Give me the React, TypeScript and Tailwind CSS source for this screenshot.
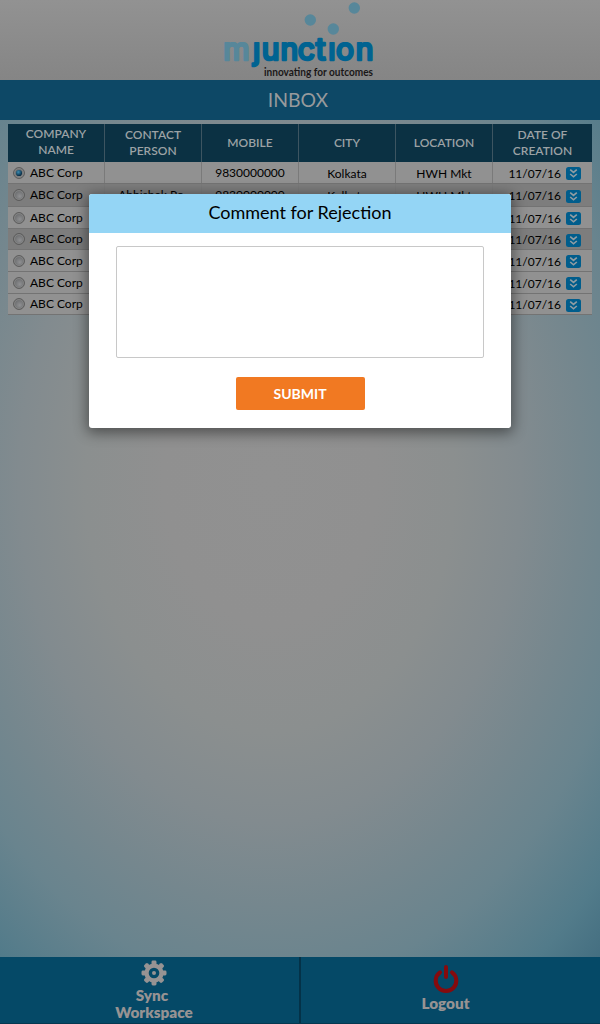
import React from "react";

const columns = [
  ["COMPANY", "NAME"],
  ["CONTACT", "PERSON"],
  ["MOBILE"],
  ["CITY"],
  ["LOCATION"],
  ["DATE OF", "CREATION"],
];

const rows = [
  { contact: "", h: "h-[22px]", bg: "bg-[#919191]" },
  { contact: "Abhishek Ro", h: "h-[23px]", bg: "bg-[#7d7d7d]" },
  { contact: "Abhishek Ro", h: "h-[22px]", bg: "bg-[#919191]" },
  { contact: "Abhishek Ro", h: "h-[21px]", bg: "bg-[#7d7d7d]" },
  { contact: "Abhishek Ro", h: "h-[22px]", bg: "bg-[#919191]" },
  { contact: "Abhishek Ro", h: "h-[22px]", bg: "bg-[#919191]" },
  { contact: "Abhishek Ro", h: "h-[21px]", bg: "bg-[#919191]" },
];

const grid = "grid grid-cols-[97px_97px_97px_97px_97px_99px]";

function Logo() {
  return (
    <svg width="160" height="80" viewBox="220 0 160 80" className="block">
      <defs>
        <clipPath id="word">
          <path d="M220 42H314V36H328V42H380V80H220Z" />
        </clipPath>
      </defs>
      <circle cx="354.3" cy="8" r="5.7" fill="#57879a" />
      <circle cx="310.3" cy="20" r="5.7" fill="#57879a" />
      <circle cx="333.3" cy="29" r="5.7" fill="#57879a" />
      <g clipPath="url(#word)">
        <text
          x="223.3 253 261.8 280.4 297.8 315.8 328.2 336 355.8"
          y="60.3"
          fontFamily="Inter, sans-serif"
          fontSize="30"
          fontWeight="400"
          strokeWidth="2.7"
          strokeLinejoin="round"
        >
          <tspan fill="#57879a" stroke="#57879a">m</tspan>
          <tspan fill="#006391" stroke="#006391">junction</tspan>
        </text>
      </g>
      <text
        x="264"
        y="75.5"
        textLength="109"
        lengthAdjust="spacingAndGlyphs"
        fontFamily="Lato, sans-serif"
        fontSize="11.5"
        fontWeight="700"
        fill="#1a1718"
      >
        innovating for outcomes
      </text>
    </svg>
  );
}

function Radio({ on }: { on: boolean }) {
  return (
    <svg width="12" height="12" viewBox="0 0 12 12" className="block shrink-0">
      <defs>
        <radialGradient id="knob" cx="60%" cy="65%" r="65%">
          <stop offset="0" stopColor="#8f9092" />
          <stop offset="1" stopColor="#6f7072" />
        </radialGradient>
        <radialGradient id="pip" cx="40%" cy="35%" r="65%">
          <stop offset="0" stopColor="#3d8db3" />
          <stop offset="1" stopColor="#06283f" />
        </radialGradient>
      </defs>
      <circle cx="6" cy="6" r="5.4" fill="#8d8d8d" stroke="#505050" strokeWidth="0.9" />
      <circle cx="6" cy="6" r="4" fill="url(#knob)" stroke="#77787a" strokeWidth="0.4" />
      {on && <circle cx="6" cy="6" r="3.1" fill="url(#pip)" />}
    </svg>
  );
}

function Expand() {
  return (
    <svg width="15" height="13" viewBox="0 0 15 13" className="block shrink-0">
      <rect width="15" height="13" rx="2.5" fill="#005d8c" />
      <path
        d="M4.2 2.6 7.5 5.4 10.8 2.6M4.2 7 7.5 9.8 10.8 7"
        fill="none"
        stroke="#929da2"
        strokeWidth="1.6"
      />
    </svg>
  );
}

function Gear() {
  return (
    <svg width="26" height="26" viewBox="-13 -13 26 26" className="block">
      <g fill="#979393">
        {[0, 45, 90, 135].map((a) => (
          <rect key={a} x="-2.5" y="-12.5" width="5" height="25" rx="1.4" transform={`rotate(${a})`} />
        ))}
        <circle r="9.6" />
      </g>
      <circle r="5.3" fill="#054967" />
      <circle r="2" fill="#979393" />
    </svg>
  );
}

function Power() {
  return (
    <svg width="26" height="30" viewBox="0 0 26 30" className="block">
      <path
        d="M7 8.4A10.3 10.3 0 1 0 19 8.4M13 3V13"
        fill="none"
        stroke="#850b0e"
        strokeWidth="4"
        strokeLinecap="round"
      />
    </svg>
  );
}

export default function App() {
  return (
    <div className="relative flex h-[1024px] w-[600px] flex-col overflow-hidden bg-[radial-gradient(ellipse_440px_600px_at_270px_480px,#919191_0%,#909090_24%,#8b8f8f_42%,#828b8f_57%,#75878e_71%,#69848e_84%,#527b8a_100%,#406b7e_112%)] font-['Lato',sans-serif] text-black">
      <header className="flex h-20 shrink-0 justify-center bg-linear-to-b from-[#929292] to-[#858585]">
        <Logo />
      </header>
      <h1 className="flex h-10 shrink-0 items-center justify-center bg-[#0d4866] pr-[4px] text-[19.4px] text-[#979a9c]">
        INBOX
      </h1>

      <main className="flex-1 px-2 pt-1">
        <div className={`${grid} h-[38px] bg-[#0b3143] text-[12px] leading-4 font-semibold text-[#9ca2a5]`}>
          {columns.map((lines, i) => (
            <div
              key={i}
              className="flex flex-col items-center justify-center border-r border-[#3d5561] first:pb-0.5 last:border-r-0"
            >
              {lines.map((l) => (
                <span key={l}>{l}</span>
              ))}
            </div>
          ))}
        </div>
        {rows.map((r, i) => (
          <div key={i} className={`${grid} ${r.h} ${r.bg} border-b border-[#737373] text-[12px] leading-4`}>
            <label className="flex items-center gap-[5px] border-r border-[#7a7a7a] pl-[5px]">
              <Radio on={i === 0} />
              <span>ABC Corp</span>
            </label>
            <div className="flex items-center justify-center border-r border-[#7a7a7a] pr-1">{r.contact}</div>
            <div className="flex items-center justify-center border-r border-[#7a7a7a]">9830000000</div>
            <div className="flex items-center justify-center border-r border-[#7a7a7a] pt-0.5">Kolkata</div>
            <div className="flex items-center justify-center border-r border-[#7a7a7a] pt-0.5">HWH Mkt</div>
            <div className="flex items-center justify-end gap-[5px] pt-0.5 pr-[11px]">
              <span>11/07/16</span>
              <Expand />
            </div>
          </div>
        ))}
      </main>

      <footer className="grid h-[67px] shrink-0 grid-cols-[299px_301px] border-b border-[#063850] bg-[#054967] text-[15.3px] leading-[17px] font-extrabold text-[#979393]">
        <button className="flex flex-col items-center pt-[3px] pl-[9px]">
          <Gear />
          <span className="mt-px -ml-1">Sync</span>
          <span>Workspace</span>
        </button>
        <button className="flex flex-col items-center border-l-2 border-[#043248] pt-[7px] pr-[10px]">
          <Power />
          <span className="mt-px">Logout</span>
        </button>
      </footer>

      <section className="absolute top-[194px] left-[89px] flex h-[234px] w-[422px] flex-col items-center rounded-[3px] bg-white shadow-[0_3px_14px_2px_rgba(0,0,0,0.45)]">
        <h2 className="flex h-[39px] w-full items-center justify-center rounded-t-[3px] bg-[#94d5f5] pb-0.5 text-[18px]">
          Comment for Rejection
        </h2>
        <textarea className="mt-[13px] h-[112px] w-[368px] shrink-0 resize-none rounded-[2px] border border-[#c8c8c8] bg-white outline-none" />
        <button className="mt-[19px] h-[33px] w-[129px] shrink-0 rounded-[2px] bg-[#f17922] text-[14px] font-bold text-white">
          SUBMIT
        </button>
      </section>
    </div>
  );
}
